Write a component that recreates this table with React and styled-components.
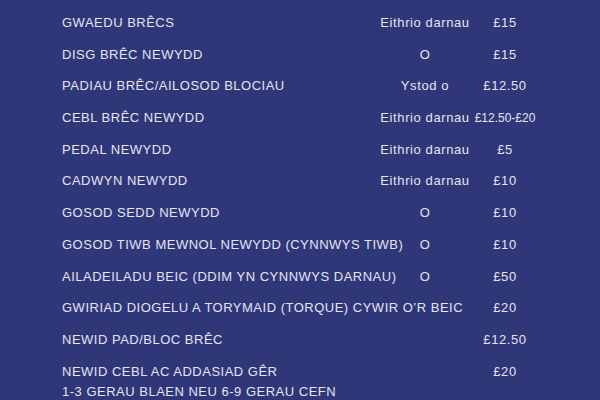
import React from 'react';
import styled, { createGlobalStyle } from 'styled-components';

const Global = createGlobalStyle`
  html, body {
    margin: 0;
    padding: 0;
    background: #2f3779;
  }
`;

const Page = styled.div`
  width: 600px;
  height: 400px;
  overflow: hidden;
  background: #2f3779;
  color: #e4e4f2;
  font-family: "Liberation Sans", Arial, sans-serif;
  font-size: 13px;
  padding: 6.7px 0 0 62px;
  box-sizing: border-box;
`;

const Table = styled.div`
  display: grid;
  grid-template-columns: 318px 90px 70px;
  grid-auto-rows: 31.7px;
  align-items: center;
`;

const Name = styled.div`
  letter-spacing: 0.5px;
  white-space: nowrap;
  position: relative;
`;

const Sub = styled.div`
  position: absolute;
  left: 0;
  top: 20px;
  letter-spacing: 0.5px;
`;

const Cell = styled.div`
  text-align: center;
  white-space: nowrap;
  letter-spacing: ${p => (p.$tight ? '0' : '0.6px')};
  font-size: ${p => (p.$small ? '12px' : '13px')};
`;

const rows = [
  ['GWAEDU BRÊCS', 'Eithrio darnau', '£15'],
  ['DISG BRÊC NEWYDD', 'O', '£15'],
  ['PADIAU BRÊC/AILOSOD BLOCIAU', 'Ystod o', '£12.50'],
  ['CEBL BRÊC NEWYDD', 'Eithrio darnau', '£12.50-£20'],
  ['PEDAL NEWYDD', 'Eithrio darnau', '£5'],
  ['CADWYN NEWYDD', 'Eithrio darnau', '£10'],
  ['GOSOD SEDD NEWYDD', 'O', '£10'],
  ['GOSOD TIWB MEWNOL NEWYDD (CYNNWYS TIWB)', 'O', '£10'],
  ['AILADEILADU BEIC (DDIM YN CYNNWYS DARNAU)', 'O', '£50'],
  ['GWIRIAD DIOGELU A TORYMAID (TORQUE) CYWIR O\u2019R BEIC', '', '£20'],
  ['NEWID PAD/BLOC BRÊC', '', '£12.50'],
  ['NEWID CEBL AC ADDASIAD GÊR', '', '£20', '1-3 GERAU BLAEN NEU 6-9 GERAU CEFN'],
];

export default function App() {
  return (
    <Page>
      <Global />
      <Table>
        {rows.map(([name, note, price, sub]) => (
          <React.Fragment key={name}>
            <Name>
              {name}
              {sub && <Sub>{sub}</Sub>}
            </Name>
            <Cell>{note}</Cell>
            <Cell $small={price.includes('-')} $tight={price.includes('-')}>{price}</Cell>
          </React.Fragment>
        ))}
      </Table>
    </Page>
  );
}
